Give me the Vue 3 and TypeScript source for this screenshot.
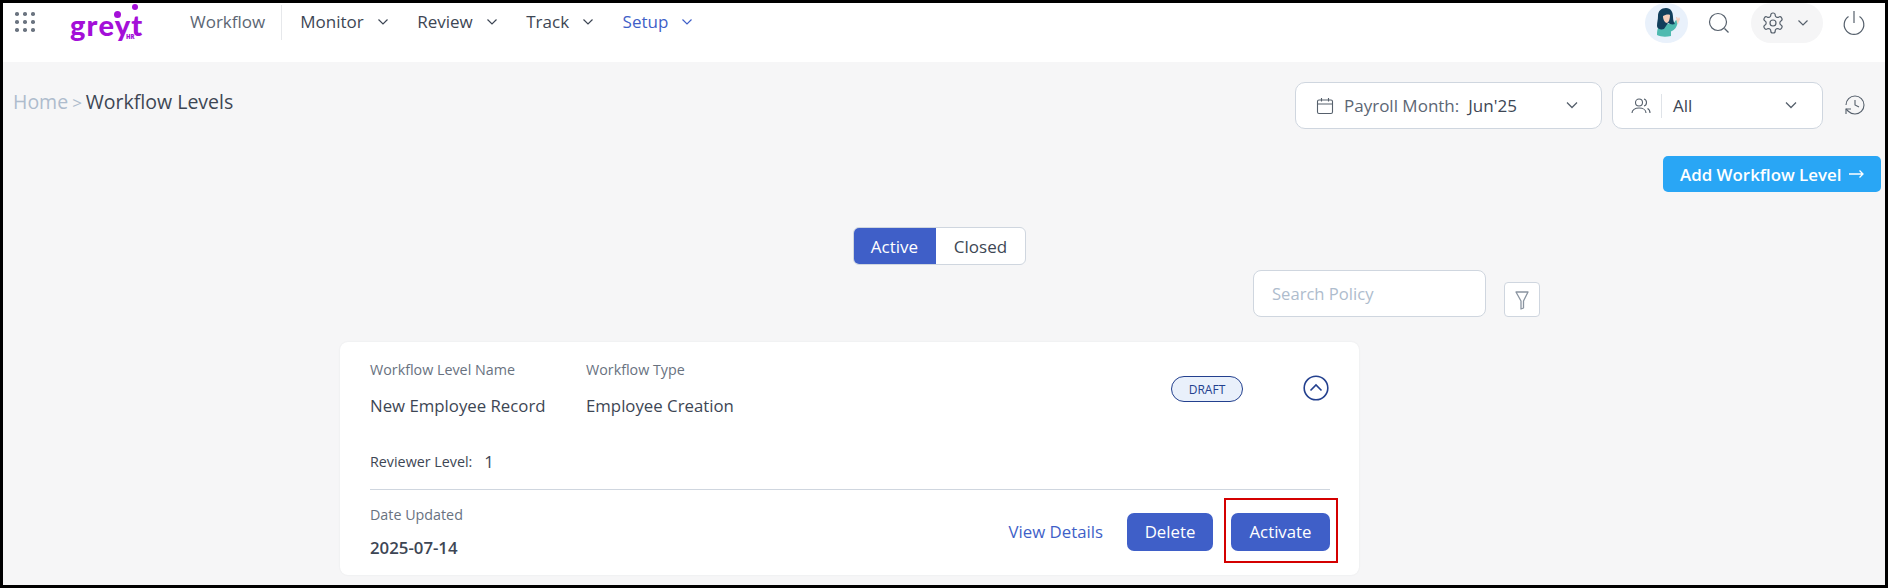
<script setup lang="ts">
interface NavItem { label: string; active?: boolean }
const navItems: NavItem[] = [
  { label: 'Monitor' },
  { label: 'Review' },
  { label: 'Track' },
  { label: 'Setup', active: true },
]
const dots: number[] = [0, 1, 2, 3, 4, 5, 6, 7, 8]
</script>

<template>
  <div class="page">
    <header class="topbar">
      <div class="grid-icon"><i v-for="d in dots" :key="d"></i></div>
      <div class="logo">
        <span class="logo-word">greyt</span>
        <span class="logo-hr">HR</span>
        <i class="logo-dot dot-y"></i>
        <i class="logo-dot dot-t"></i>
      </div>
      <a class="nav-first">Workflow</a>
      <span class="nav-sep"></span>
      <nav class="nav">
        <a v-for="n in navItems" :key="n.label" class="nav-item" :class="{ active: n.active }">
          {{ n.label }}
          <svg width="12" height="8" viewBox="0 0 12 8" fill="none" stroke="currentColor" stroke-width="1.2"><path d="M1.500 1.500 6 6l4.500-4.500" /></svg>
        </a>
      </nav>
      <div class="top-right">
        <div class="avatar">
          <svg width="40" height="40" viewBox="0 0 40 40">
            <path d="M10 32c0-7 2-11 7-11h5c3 0 5-1 7-4l2 1c-1 6-3 9-7 10.500V33c-5 1-10 1-14-1z" fill="#4fbab0" />
            <path d="M11 13c0-5 3-8 8-8 5 0 7 4 7 9 0 3 1 6 2 7-3 1-5 0-7-1l-4 6c-3 1-7 0-7-3 0-4 1-6 1-10z" fill="#123f5c" />
            <path d="M16 13c2-1 5-2 7-1 0 4-1 7-3 8-2 0-4-3-4-7z" fill="#f7cfbd" />
            <path d="M30 20l-1-6h1l1 2 1-2 1 2-2 5z" fill="#f7cfbd" />
          </svg>
        </div>
        <svg class="search" width="24" height="24" viewBox="0 0 24 24" fill="none" stroke="#56606c" stroke-width="1.200"><circle cx="11" cy="11" r="8.500" /><path d="m17.500 17.500 4 4" /></svg>
        <div class="gear-pill">
          <svg width="24" height="24" viewBox="0 0 24 24" fill="none" stroke="#56606c" stroke-width="1.200" stroke-linejoin="round"><circle cx="12" cy="12" r="3" /><path d="M12.220 2h-.44a2 2 0 0 0-2 2v.18a2 2 0 0 1-1 1.730l-.43.25a2 2 0 0 1-2 0l-.15-.08a2 2 0 0 0-2.730.73l-.22.38a2 2 0 0 0 .73 2.730l.15.1a2 2 0 0 1 1 1.720v.51a2 2 0 0 1-1 1.740l-.15.09a2 2 0 0 0-.73 2.730l.22.38a2 2 0 0 0 2.730.73l.15-.08a2 2 0 0 1 2 0l.43.25a2 2 0 0 1 1 1.730V20a2 2 0 0 0 2 2h.44a2 2 0 0 0 2-2v-.18a2 2 0 0 1 1-1.730l.43-.25a2 2 0 0 1 2 0l.15.08a2 2 0 0 0 2.730-.73l.22-.39a2 2 0 0 0-.73-2.730l-.15-.08a2 2 0 0 1-1-1.740v-.5a2 2 0 0 1 1-1.740l.15-.09a2 2 0 0 0 .73-2.730l-.22-.38a2 2 0 0 0-2.730-.73l-.15.08a2 2 0 0 1-2 0l-.43-.25a2 2 0 0 1-1-1.730V4a2 2 0 0 0-2-2z" /></svg>
          <svg width="12" height="8" viewBox="0 0 12 8" fill="none" stroke="#56606c" stroke-width="1.200"><path d="M1.500 1.500 6 6l4.500-4.500" /></svg>
        </div>
        <svg class="power" width="24" height="26" viewBox="0 0 24 26" fill="none" stroke="#56606c" stroke-width="1.200"><path d="M12 1v12" /><path d="M6.500 6.500a9.800 9.800 0 1 0 11 0" /></svg>
      </div>
    </header>

    <main class="main">
      <section class="title-row">
        <div class="crumbs"><span class="home">Home</span><span class="gt">&gt;</span><span class="current">Workflow Levels</span></div>
        <div class="selector payroll">
          <svg width="18" height="18" viewBox="0 0 18 18" fill="none" stroke="#56606c" stroke-width="1.100"><rect x="1.500" y="3" width="15" height="13.500" rx="1.500" /><path d="M1.500 7h15M5.500 1v3.500M12.500 1v3.500" /></svg>
          <span class="sel-label">Payroll Month:</span>
          <span class="sel-value">Jun'25</span>
          <svg class="sel-chev" width="14" height="9" viewBox="0 0 14 9" fill="none" stroke="#56606c" stroke-width="1.300"><path d="m2 1.500 5 5 5-5" /></svg>
        </div>
        <div class="selector people">
          <svg width="20" height="16" viewBox="0 0 20 16" fill="none" stroke="#56606c" stroke-width="1.100"><circle cx="8" cy="4.500" r="3.500" /><path d="M1 15c0-3 3-5 7-5s7 2 7 5M13 1c1.500.4 2.500 1.800 2.500 3.500S14.500 7.600 13 8M16.500 10.500c1.500.8 2.500 2.400 2.500 4.500" /></svg>
          <span class="vsep"></span>
          <span class="sel-value all">All</span>
          <svg class="sel-chev" width="14" height="9" viewBox="0 0 14 9" fill="none" stroke="#56606c" stroke-width="1.300"><path d="m2 1.500 5 5 5-5" /></svg>
        </div>
        <svg class="history" width="24" height="24" viewBox="0 0 24 24" fill="none" stroke="#56606c" stroke-width="1.100"><path d="M3 12a9 9 0 1 1 9 9 9.750 9.750 0 0 1-6.740-2.740L3 16" /><path d="M3 21v-5h5" /><path d="M12 7v5l4 2" /></svg>
      </section>

      <section class="add-row">
        <button class="add-btn">
          <span>Add Workflow Level</span>
          <svg width="15" height="10" viewBox="0 0 15 10" fill="none" stroke="#fff" stroke-width="1.300"><path d="M0 5h14M10.500 1.500 14 5l-3.500 3.500" /></svg>
        </button>
      </section>

      <section class="toggle-row">
        <div class="toggle"><span class="tg on">Active</span><span class="tg">Closed</span></div>
      </section>

      <section class="search-row">
        <div class="search-box">Search Policy</div>
        <div class="filter-btn">
          <svg width="14" height="20" viewBox="0 0 14 20" fill="none" stroke="#8a94a0" stroke-width="1.300" stroke-linejoin="round"><path d="M1 2h12L8.500 11v7L6 19v-8z" /></svg>
        </div>
      </section>

      <article class="card">
        <div class="card-top">
          <div class="field name">
            <div class="lbl">Workflow Level Name</div>
            <div class="val">New Employee Record</div>
          </div>
          <div class="field">
            <div class="lbl">Workflow Type</div>
            <div class="val">Employee Creation</div>
          </div>
          <span class="badge">DRAFT</span>
          <svg class="collapse" width="26" height="26" viewBox="0 0 26 26" fill="none" stroke="#23408e" stroke-width="1.600"><circle cx="13" cy="13" r="11.800" /><path d="m7.500 15.500 5.500-5.500 5.500 5.500" /></svg>
        </div>
        <div class="reviewer"><span class="rv-lbl">Reviewer Level:</span><span class="rv-val">1</span></div>
        <div class="card-bottom">
          <div class="date">
            <div class="lbl">Date Updated</div>
            <div class="date-val">2025-07-14</div>
          </div>
          <a class="details">View Details</a>
          <button class="btn">Delete</button>
          <span class="highlight"><button class="btn activate">Activate</button></span>
        </div>
      </article>
    </main>
  </div>
</template>

<style scoped>
.page {
  box-sizing: border-box;
  width: 1888px;
  height: 588px;
  border: 3px solid #000;
  background: #f6f6f7;
  display: flex;
  flex-direction: column;
  overflow: hidden;
  font-family: "Open Sans", "Noto Sans", sans-serif;
  color: #3d4654;
}
.topbar {
  height: 59px;
  flex: none;
  background: #fff;
  display: flex;
  align-items: flex-start;
}
.grid-icon {
  margin: 9px 0 0 12px;
  width: 20px;
  height: 20px;
  display: grid;
  grid-template-columns: repeat(3, 4px);
  grid-template-rows: repeat(3, 4px);
  justify-content: space-between;
  align-content: space-between;
}
.grid-icon i { width: 3.500px; height: 3.500px; border-radius: 50%; background: #6b7480; }
.logo {
  position: relative;
  margin-left: 35px;
  width: 75px;
  height: 40px;
  color: #a40fd8;
}
.logo-word {
  position: absolute;
  left: 0;
  top: 2px;
  font: 900 29px/40px Lato, sans-serif;
  letter-spacing: 1.200px;
}
.logo-hr {
  position: absolute;
  left: 56px;
  top: 30px;
  font: 800 6px/8px "Open Sans", sans-serif;
}
.logo-dot {
  position: absolute;
  border-radius: 50%;
  background: #a40fd8;
}
.dot-y { left: 44px; top: 8px; width: 7px; height: 7px; }
.dot-t { left: 62px; top: 1px; width: 6px; height: 6px; }
.nav-first {
  margin: 9px 0 0 45px;
  font-size: 17px;
  line-height: 20px;
  color: #5c6674;
}
.nav-sep { width: 1px; height: 35px; margin: 2px 18px 0 16px; background: #e6e8eb; }
.nav { display: flex; gap: 28.500px; margin-top: 9px; }
.nav-item {
  display: flex;
  align-items: center;
  gap: 13px;
  font-size: 17px;
  line-height: 20px;
  color: #3d4654;
}
.nav-item.active { color: #3f5fc8; }
.top-right { margin-left: auto; display: flex; align-items: center; height: 40px; }
.avatar {
  width: 43px;
  height: 40px;
  border-radius: 50%;
  background: #e9f1fb;
  display: flex;
  align-items: center;
  justify-content: center;
}
.search { margin-left: 19px; }
.gear-pill {
  margin-left: 20px;
  width: 72px;
  height: 40px;
  border-radius: 20px;
  background: #f5f5f6;
  display: flex;
  align-items: center;
  gap: 12px;
  padding-left: 10px;
  box-sizing: border-box;
}
.power { margin: 0 19px 0 19px; }
.main { flex: 1; padding-top: 20px; }
.title-row { display: flex; align-items: flex-start; height: 47px; padding-right: 18px; }
.crumbs { margin: 8px auto 0 10px; display: flex; align-items: baseline; line-height: 24px; }
.home { font-size: 19.500px; color: #aebccd; }
.gt { font-size: 17px; color: #aebccd; margin: 0 4px; }
.current { font-size: 19.500px; color: #3d4654; }
.selector {
  box-sizing: border-box;
  height: 47px;
  background: #fff;
  border: 1px solid #cfd6df;
  border-radius: 10px;
  display: flex;
  align-items: center;
  font-size: 17px;
}
.payroll { width: 307px; padding-left: 20px; }
.people { width: 211px; margin-left: 10px; padding-left: 18px; }
.sel-label { margin-left: 10px; color: #5c6674; }
.sel-value { margin-left: 9px; color: #3d4654; }
.sel-value.all { margin-left: 11px; }
.vsep { width: 1px; height: 24px; background: #dfe3e8; margin-left: 10px; }
.payroll .sel-chev { margin-left: auto; margin-right: 22px; }
.people .sel-chev { margin-left: auto; margin-right: 24px; }
.history { margin: 11px 0 0 20px; }
.add-row { display: flex; justify-content: flex-end; margin-top: 27px; padding-right: 4px; }
.add-btn {
  width: 218px;
  height: 36px;
  border: 0;
  border-radius: 5px;
  background: #29a6f5;
  color: #fff;
  font: 600 16.900px "Open Sans", sans-serif;
  padding: 0 0 0 17px;
  display: flex;
  align-items: center;
  gap: 7px;
}
.toggle-row { margin-top: 35px; padding-left: 850px; }
.toggle {
  box-sizing: border-box;
  width: 173px;
  height: 38px;
  display: flex;
  background: #fff;
  border: 1px solid #cfd6df;
  border-radius: 6px;
  overflow: hidden;
  font-size: 17px;
}
.tg { display: flex; align-items: center; justify-content: center; flex: 1; color: #3d4654; }
.tg.on { flex: none; width: 83px; background: #3f5fc8; color: #fff; margin: -1px 0 -1px -1px; }
.search-row { display: flex; justify-content: flex-end; align-items: flex-end; margin-top: 5px; padding-right: 345px; }
.search-box {
  box-sizing: border-box;
  width: 233px;
  height: 47px;
  padding-left: 18px;
  display: flex;
  align-items: center;
  background: #fff;
  border: 1px solid #cfd6df;
  border-radius: 8px;
  font-size: 16.600px;
  color: #aebccd;
}
.filter-btn {
  box-sizing: border-box;
  width: 36px;
  height: 35px;
  margin-left: 18px;
  display: flex;
  align-items: center;
  justify-content: center;
  background: #fff;
  border: 1px solid #cfd6df;
  border-radius: 4px;
}
.card {
  box-sizing: border-box;
  width: 1019px;
  height: 233px;
  margin: 25px 0 0 337px;
  padding: 18px 29px 0 30px;
  background: #fff;
  border-radius: 8px;
  box-shadow: 0 0 2px rgba(40, 50, 70, .08);
}
.card-top { display: flex; height: 69px; }
.field.name { width: 216px; }
.lbl { font-size: 14.300px; line-height: 20px; color: #69727f; }
.val { margin-top: 15px; font-size: 16.800px; line-height: 22px; color: #3d4654; }
.badge {
  box-sizing: border-box;
  margin: 16px 0 0 auto;
  width: 72px;
  height: 26px;
  border: 1px solid #23408e;
  border-radius: 13px;
  background: #e9f0fb;
  color: #23408e;
  font-size: 12px;
  display: flex;
  align-items: center;
  justify-content: center;
}
.collapse { margin: 15px 0 0 61px; position: relative; left: -1px; }
.reviewer {
  margin-top: 18px;
  height: 28px;
  display: flex;
  align-items: center;
}
.rv-lbl { font-size: 14.300px; color: #3d4654; }
.rv-val { margin-left: 12px; font-size: 16.800px; color: #3d4654; }
.card-bottom {
  margin-top: 14px;
  border-top: 1px solid #cfd6df;
  display: flex;
  align-items: flex-start;
}
.date { margin-top: 15px; margin-right: auto; }
.date-val { margin-top: 12px; font-size: 16.800px; line-height: 22px; font-weight: 600; color: #3d4654; }
.details { margin: 31px 24px 0 0; font-size: 16.800px; line-height: 22px; color: #3f5fc8; }
.btn {
  box-sizing: border-box;
  margin-top: 23px;
  width: 86px;
  height: 38px;
  border: 0;
  border-radius: 7px;
  background: #3f5fc8;
  color: #fff;
  font: 16.800px "Open Sans", sans-serif;
  padding: 0 0 1px;
}
.highlight {
  position: relative;
  margin-left: 18px;
  display: block;
}
.highlight::after {
  content: "";
  position: absolute;
  left: -7px;
  right: -8px;
  top: 8px;
  height: 65px;
  border: 2px solid #d40000;
  box-sizing: border-box;
  pointer-events: none;
}
.btn.activate { width: 99px; display: block; }
</style>
